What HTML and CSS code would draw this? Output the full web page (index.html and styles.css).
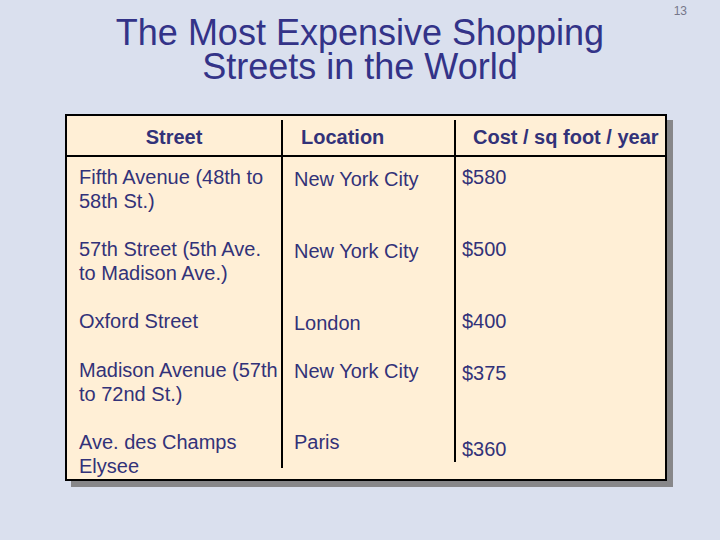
FILE: index.html
```html
<!DOCTYPE html>
<html>
<head>
<meta charset="utf-8">
<link rel="stylesheet" href="styles.css">
</head>
<body>
<div class="slide">
  <div class="pagenum">13</div>
  <h1 class="title"><span class="tline">The Most Expensive Shopping</span><span class="tline">Streets in the World</span></h1>
  <div class="table">
    <div class="row head">
      <div class="cell c1">Street</div>
      <div class="cell c2">Location</div>
      <div class="cell c3">Cost / sq foot / year</div>
    </div>
    <div class="row r1">
      <div class="cell c1">Fifth Avenue (48th to 58th St.)</div>
      <div class="cell c2 dn2">New York City</div>
      <div class="cell c3">$580</div>
    </div>
    <div class="row r2">
      <div class="cell c1">57th Street (5th Ave. to Madison Ave.)</div>
      <div class="cell c2 dn2">New York City</div>
      <div class="cell c3">$500</div>
    </div>
    <div class="row r3">
      <div class="cell c1">Oxford Street</div>
      <div class="cell c2 dn2">London</div>
      <div class="cell c3">$400</div>
    </div>
    <div class="row r4">
      <div class="cell c1">Madison Avenue (57th to 72nd St.)</div>
      <div class="cell c2 dn1">New York City</div>
      <div class="cell c3 dn3">$375</div>
    </div>
    <div class="row r5">
      <div class="cell c1">Ave. des Champs Elysee</div>
      <div class="cell c2 last2">Paris</div>
      <div class="cell c3 dn7 last3">$360</div>
    </div>
  </div>
</div>
</body>
</html>
```
FILE: styles.css
```css
html, body {
  margin: 0;
  padding: 0;
  background: #dae0ee;
}
.slide {
  width: 720px;
  height: 540px;
  background: #dae0ee;
  font-family: "Liberation Sans", Arial, sans-serif;
  color: #323279;
  overflow: hidden;
}
.pagenum {
  height: 0;
  text-align: right;
  padding-right: 33px;
  font-size: 12px;
  line-height: 22px;
  color: #76778a;
}
.title {
  margin: 0;
  padding-top: 16px;
  font-weight: normal;
  font-size: 36px;
  line-height: 34px;
  text-align: center;
  color: #333388;
}
.tline {
  display: block;
  height: 34px;
}
.table {
  margin: 30px 0 0 65px;
  width: 602px;
  box-sizing: border-box;
  border: 2px solid #000;
  background: #ffefd6;
  box-shadow: 6px 6px 0 #878789;
}
.row {
  display: grid;
  grid-template-columns: 214px 173px 1fr;
  box-sizing: border-box;
}
.cell {
  font-size: 20px;
  line-height: 24px;
  padding-top: 9px;
  box-sizing: border-box;
}
.c1 { padding-left: 12px; padding-right: 0; }
.c2 { border-left: 2px solid #000; padding-left: 11px; }
.c3 { border-left: 2px solid #000; padding-left: 6px; }
.head { height: 41px; border-bottom: 2px solid #000; }
.head .cell { font-weight: bold; }
.head .c1 { text-align: center; padding-left: 0; padding-right: 0; }
.head .c2 { margin-top: 4px; padding-top: 5px; padding-left: 18px; }
.head .c3 { margin-top: 4px; padding-top: 5px; padding-left: 17px; }
.r1 { height: 71px; }
.r1 .cell { padding-top: 8px; }
.r1 .dn2 { padding-top: 10px; }
.r2 { height: 72px; }
.r3 { height: 49px; }
.r4 { height: 72px; }
.r5 { height: 58px; }
.dn1 { padding-top: 10px; }
.dn2 { padding-top: 11px; }
.dn3 { padding-top: 12px; }
.dn7 { padding-top: 16px; }
.last2 { margin-bottom: 11px; }
.last3 { margin-bottom: 17px; }
```
